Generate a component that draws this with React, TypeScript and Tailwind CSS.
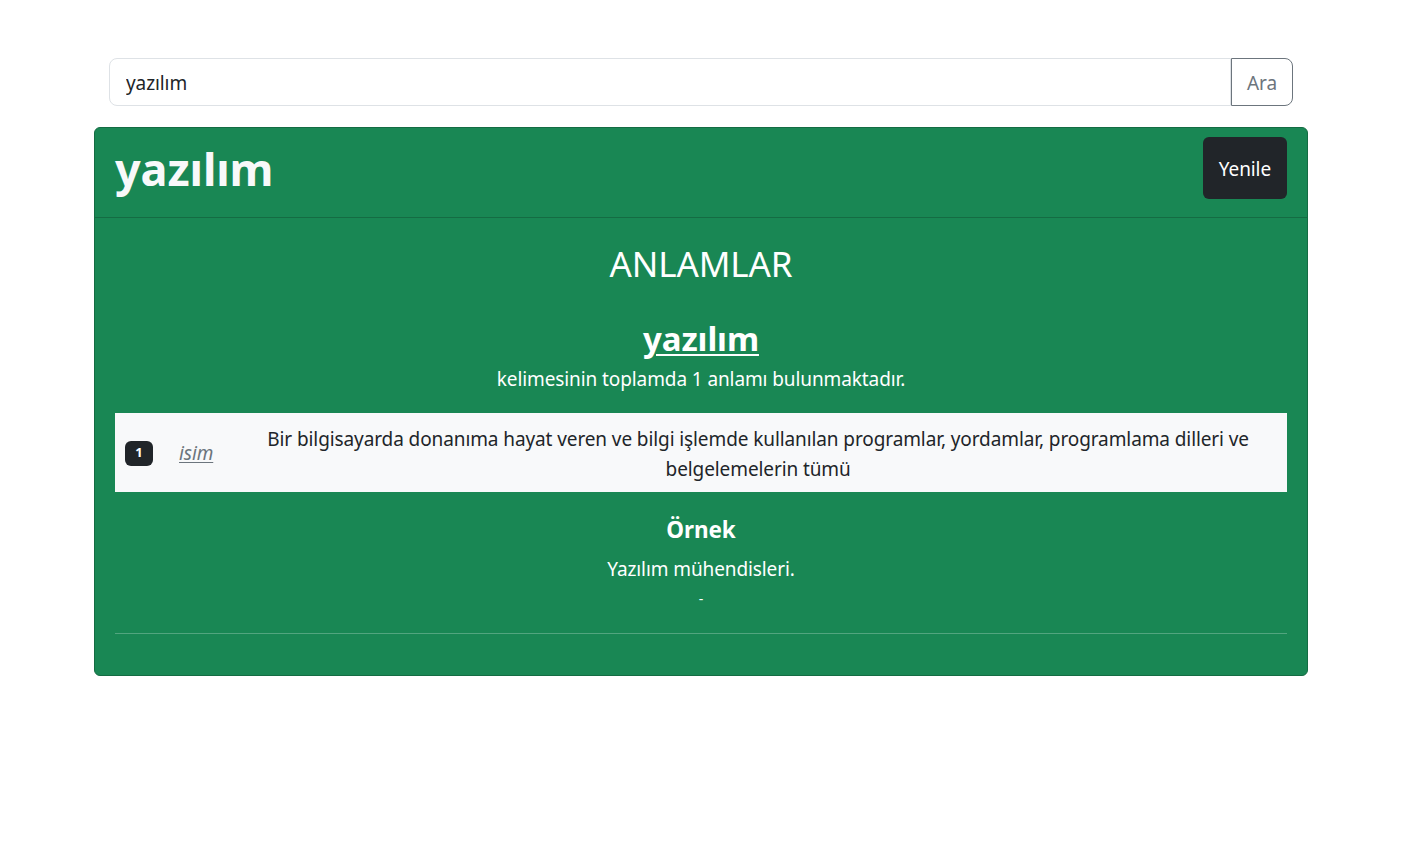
const font = { fontFamily: '"Noto Sans", "Open Sans", sans-serif' };

export default function App() {
  const word = "yazılım";

  return (
    <div className="min-h-[856px] bg-white pl-[94px] pt-[58px] tracking-[-0.1px]" style={font}>
      <div className="w-[1214px]">
        {/* search */}
        <div className="mx-[15px] flex h-[48px]">
          <input
            defaultValue={word}
            className="flex-1 rounded-l-lg border border-[#dee2e6] px-4 pt-[3px] text-[19px] text-[#212529] outline-none"
          />
          <button className="w-[62px] rounded-r-lg border border-[#6c757d] pt-[3px] text-[19px] text-[#6c757d]">
            Ara
          </button>
        </div>

        {/* card */}
        <div className="mt-[21px] overflow-hidden rounded-md border border-[#146c43] bg-[#198754] text-white">
          <div className="flex h-[90px] items-start justify-between border-b border-[#146c43] px-5 pt-[9px]">
            <h1 className="mt-[5px] text-[45px] font-bold leading-[1.2] text-[#f8f9fa]">{word}</h1>
            <button className="rounded-md bg-[#212529] px-4 pt-[17px] pb-[15px] text-[19px] leading-[30px] text-white">
              Yenile
            </button>
          </div>

          <div className="px-5 pt-[25px] pb-[41px] text-center">
            <h2 className="text-[35px] leading-[1.2]">ANLAMLAR</h2>
            <h3 className="mt-[34px] text-[33px] font-bold leading-[1.2] underline decoration-2 underline-offset-[3px]">
              {word}
            </h3>
            <p className="mt-[5px] text-[19px] leading-[30px]">kelimesinin toplamda 1 anlamı bulunmaktadır.</p>

            <div className="mt-[19px] flex h-[79px] items-center bg-[#f8f9fa] px-[10px]">
              <span className="mt-[2px] flex h-[25px] w-[28px] items-center justify-center rounded-md bg-[#212529] text-[13px] font-bold text-white">
                1
              </span>
              <span className="ml-[26px] mt-[3px] text-[19px] italic text-[#6c757d] underline underline-offset-2">isim</span>
              <p className="ml-[26px] flex-1 pt-[4px] text-center text-[19px] leading-[30px] text-[#212529]">
                Bir bilgisayarda donanıma hayat veren ve bilgi işlemde kullanılan programlar, yordamlar, programlama dilleri ve belgelemelerin tümü
              </p>
            </div>

            <h4 className="mt-[24px] text-[22.5px] font-bold leading-[1.2]">Örnek</h4>
            <p className="mt-[11px] text-[19px] leading-[30px]">Yazılım mühendisleri.</p>
            <p className="mt-[4px] text-[14px] leading-[21px]">-</p>

            <hr className="mt-[24px] border-t border-white/25" />
          </div>
        </div>
      </div>
    </div>
  );
}
